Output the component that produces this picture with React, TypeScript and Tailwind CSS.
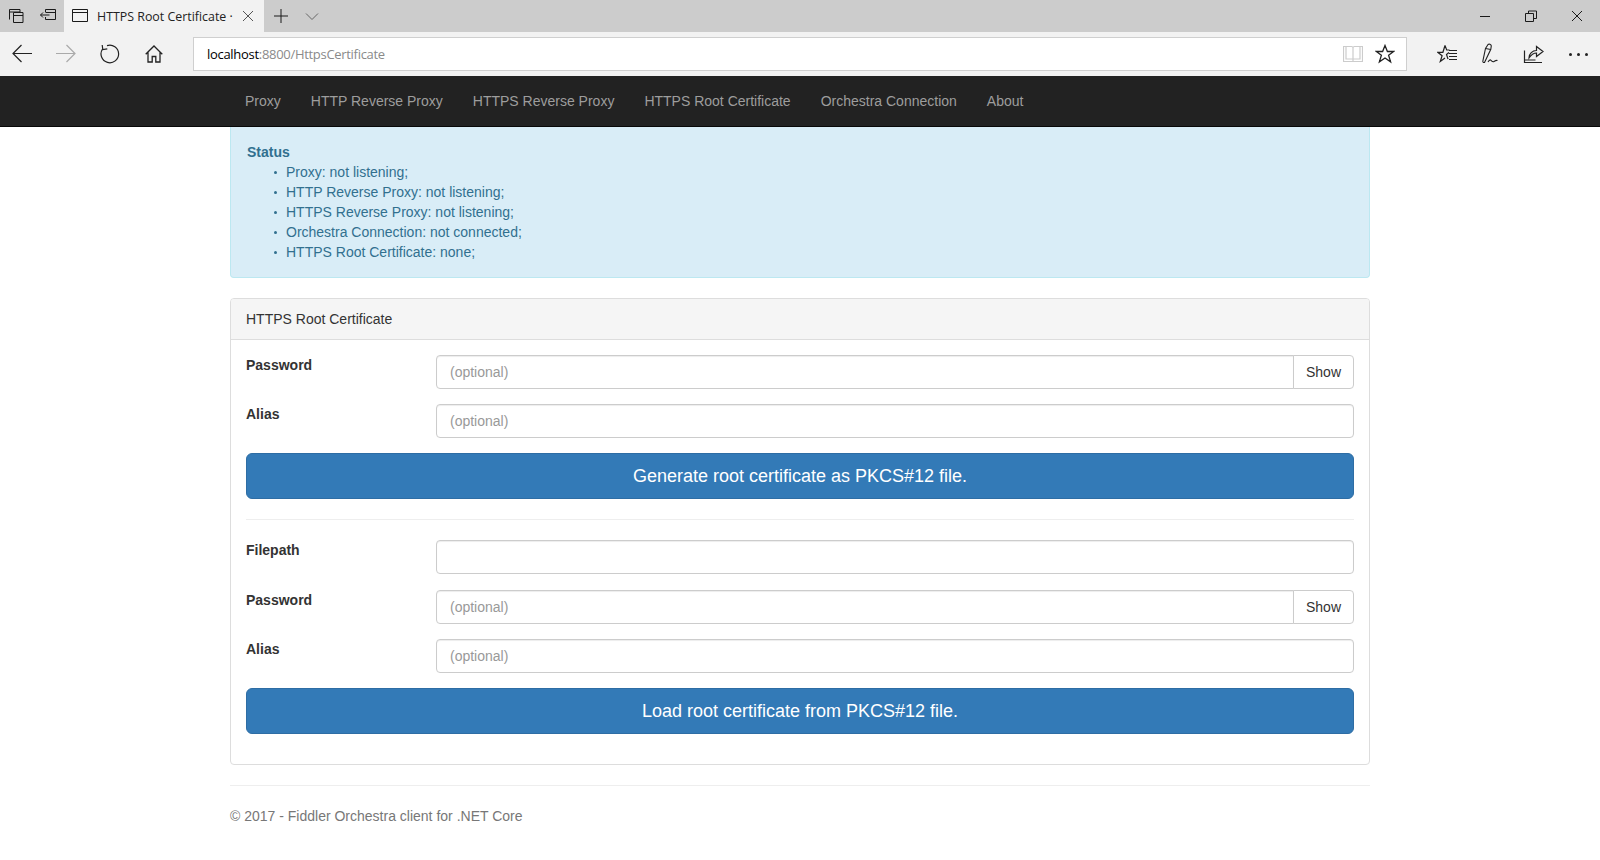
const navLinks = [
  "Proxy",
  "HTTP Reverse Proxy",
  "HTTPS Reverse Proxy",
  "HTTPS Root Certificate",
  "Orchestra Connection",
  "About",
];

const statusLines = [
  "Proxy: not listening;",
  "HTTP Reverse Proxy: not listening;",
  "HTTPS Reverse Proxy: not listening;",
  "Orchestra Connection: not connected;",
  "HTTPS Root Certificate: none;",
];

function Glyph({ size = 24, children }: { size?: number; children: React.ReactNode }) {
  return (
    <svg
      width={size}
      height={size}
      viewBox={`0 0 ${size} ${size}`}
      fill="none"
      stroke="currentColor"
      strokeWidth="1"
      className="block"
    >
      {children}
    </svg>
  );
}

function ChromeButton({ className, children }: { className: string; children: React.ReactNode }) {
  return <div className={`flex shrink-0 items-center justify-center ${className}`}>{children}</div>;
}

function TitleBar() {
  return (
    <div className="flex h-8 bg-[#cccccc] text-[#1a1a1a]">
      <ChromeButton className="w-8">
        <Glyph size={16}>
          <path d="M1.5 11.5v-10h10.5v3M1.5 4h10.5" />
          <path d="M5.5 4.5h9.5v10H5.5zM5.5 7.5h9.5" fill="#cccccc" />
        </Glyph>
      </ChromeButton>
      <ChromeButton className="w-8">
        <Glyph size={18}>
          <path d="M6.5 5v-2.5h10v10h-10V10M6.5 5.5h10M1.5 8h9M1.5 8l2.5-2.5M1.5 8l2.5 2.5" />
        </Glyph>
      </ChromeButton>
      <div className="flex w-[200px] shrink-0 items-center bg-[#f2f2f2] pl-2">
        <Glyph size={16}>
          <path d="M.5 1.5h15v12H.5zM.5 4.5h15" />
        </Glyph>
        <span className="ml-[9px] w-[140px] overflow-hidden whitespace-nowrap pt-px font-['Open_Sans',sans-serif] text-[12.4px] text-[#222]">
          HTTPS Root Certificate ·
        </span>
        <div className="ml-[5px] text-[#555]">
          <Glyph size={12}>
            <path d="M1 1l10 10M11 1L1 11" />
          </Glyph>
        </div>
      </div>
      <ChromeButton className="w-[34px]">
        <Glyph size={14}>
          <path d="M7 0v14M0 7h14" />
        </Glyph>
      </ChromeButton>
      <ChromeButton className="w-7 text-[#666]">
        <Glyph size={14}>
          <path d="M1 4.5l6 6 6-6" />
        </Glyph>
      </ChromeButton>
      <div className="flex-1" />
      <ChromeButton className="w-[46px]">
        <Glyph size={12}>
          <path d="M1 6.5h10" />
        </Glyph>
      </ChromeButton>
      <ChromeButton className="w-[46px]">
        <Glyph size={12}>
          <path d="M3.5 3V1h8v7.5H9M.5 3.5h8v8h-8z" />
        </Glyph>
      </ChromeButton>
      <ChromeButton className="w-[46px]">
        <Glyph size={12}>
          <path d="M1 1l10 10M11 1L1 11" />
        </Glyph>
      </ChromeButton>
    </div>
  );
}

function StarShape() {
  return <path d="M10 1.5l2.4 6h6.3l-5.1 3.8 2 6.5L10 14l-5.6 3.8 2-6.5L1.3 7.5h6.3z" strokeWidth="1.3" />;
}

function Toolbar() {
  return (
    <div className="flex h-11 items-center bg-[#f2f2f2] text-[#222]">
      <ChromeButton className="w-11">
        <Glyph size={20}>
          <path d="M20 9.5H1.5M9.5 1L1 9.5l8.5 8.5" strokeWidth="1.2" />
        </Glyph>
      </ChromeButton>
      <ChromeButton className="w-11 text-[#aaaaaa]">
        <Glyph size={20}>
          <path d="M0 9.5h18.5M10.5 1L19 9.5 10.5 18" strokeWidth="1.2" />
        </Glyph>
      </ChromeButton>
      <ChromeButton className="w-11">
        <Glyph size={20}>
          <path d="M7 1.6A8.8 8.8 0 1 1 2.4 5.2M2.2 1l.6 4.6 4.5-.7" strokeWidth="1.2" />
        </Glyph>
      </ChromeButton>
      <ChromeButton className="w-11">
        <Glyph size={18}>
          <path d="M.7 9.2L9 1l8.3 8.2M3 7.5v9.5h4.2v-5.5h3.6V17H15V7.5" strokeWidth="1.3" />
        </Glyph>
      </ChromeButton>
      <div className="mx-[17px] flex h-[34px] flex-1 items-center border border-[#cfcfcf] bg-white pl-[13px]">
        <span className="flex-1 font-['Open_Sans',sans-serif] text-[13px] tracking-[-0.3px] text-black">
          localhost<span className="text-[#8a8a8a]">:8800/HttpsCertificate</span>
        </span>
        <div className="mr-[12px] text-[#cccccc]">
          <Glyph size={20}>
            <path d="M.5 2.5h8c.8 0 1.5.5 1.5 1.2 0-.7.7-1.2 1.5-1.2h8v15h-19zM10 3.7V17.5M3 2.5v12.5h6.5M17 2.5v12.5h-6.5" strokeWidth="1.2" />
          </Glyph>
        </div>
        <div className="mr-[11px]">
          <Glyph size={20}>
            <StarShape />
          </Glyph>
        </div>
      </div>
      <ChromeButton className="w-11 pl-1">
        <Glyph size={22}>
          <path d="M8 2.5l1.7 4.5h2.8M12 9.5L9.5 11.5l1.5 4.5M8 15l-4.7 3.5 1.8-5.7L.8 9.3h5.1L8 2.5" strokeWidth="1.2" />
          <path d="M12 7.5h8M12 10.5h8M12 13.5h8M12 16.5h8" strokeWidth="1.2" />
        </Glyph>
      </ChromeButton>
      <ChromeButton className="w-11 pl-0.5">
        <Glyph size={22}>
          <path d="M4.5 19.5c-1.3.3-1.9-.4-1.6-1.7L5.5 5.5 8 1.5c1-.8 3-.3 3.3 1.3l-.5 3.5z" strokeWidth="1.1" />
          <path d="M5.5 5.5l5.3 1M8 19c1-1.5 2-2.7 3-1.7s2 1.8 3 1.2 2-1.4 3.5-1" strokeWidth="1.1" />
        </Glyph>
      </ChromeButton>
      <ChromeButton className="w-11">
        <Glyph size={22}>
          <path d="M1.5 7.5V19.5h17.5M1.5 17h11" strokeWidth="1.2" />
          <path d="M6 15c0-4.5 3.5-7.5 7.5-7.5V3.5l6.5 5-6.5 5v-3.5c-3 0-5.5 2-7.5 5z" strokeWidth="1.2" />
        </Glyph>
      </ChromeButton>
      <ChromeButton className="w-11 gap-[5px]">
        <span className="size-[3px] rounded-full bg-[#222]" />
        <span className="size-[3px] rounded-full bg-[#222]" />
        <span className="size-[3px] rounded-full bg-[#222]" />
      </ChromeButton>
    </div>
  );
}

function Field({ label, placeholder, show, className }: { label: string; placeholder?: string; show?: boolean; className: string }) {
  return (
    <div className={`flex ${className}`}>
      <label className="w-[190px] shrink-0 font-bold leading-5">{label}</label>
      <div className="flex h-[34px] flex-1">
        <input
          placeholder={placeholder}
          className={`h-full min-w-0 flex-1 border border-[#cccccc] bg-white px-[13px] text-[14px] shadow-[inset_0_1px_1px_rgba(0,0,0,0.075)] outline-none placeholder:text-[#999999] ${show ? "rounded-l-[4px]" : "rounded-[4px]"}`}
        />
        {show && (
          <button className="-ml-px w-[61px] rounded-r-[4px] border border-[#cccccc] bg-white text-[14px] text-[#333333]">
            Show
          </button>
        )}
      </div>
    </div>
  );
}

function PrimaryButton({ children }: { children: React.ReactNode }) {
  return (
    <button className="flex h-[46px] w-full items-center justify-center rounded-[6px] border border-[#2e6da4] bg-[#337ab7] text-[18px] text-white">
      {children}
    </button>
  );
}

export default function App() {
  return (
    <div className="h-[860px] overflow-hidden bg-white font-['Liberation_Sans',Arial,sans-serif] text-[14px] leading-5 text-[#333333]">
      <TitleBar />
      <Toolbar />

      <nav className="h-[51px] border-b border-[#080808] bg-[#222222]">
        <ul className="mx-auto flex w-[1140px]">
          {navLinks.map((link) => (
            <li key={link} className="px-[15px] py-[15px] text-[#9d9d9d]">
              {link}
            </li>
          ))}
        </ul>
      </nav>

      <main className="mx-auto w-[1140px]">
        <div className="rounded-b-[4px] border border-t-0 border-[#bce8f1] bg-[#d9edf7] px-[15px] pb-[15px] pt-[15px] text-[#31708f]">
          <strong className="ml-px block font-bold">Status</strong>
          <ul className="pl-10">
            {statusLines.map((line) => (
              <li key={line} className="flex items-center">
                <span className="-ml-[12px] mr-[9px] size-[3px] rounded-full bg-current" />
                {line}
              </li>
            ))}
          </ul>
        </div>

        <section className="mt-5 rounded-[4px] border border-[#dddddd]">
          <div className="rounded-t-[3px] border-b border-[#dddddd] bg-[#f5f5f5] px-[15px] py-[10px]">
            HTTPS Root Certificate
          </div>
          <div className="p-[15px]">
            <Field label="Password" placeholder="(optional)" show className="mb-[15px]" />
            <Field label="Alias" placeholder="(optional)" className="mb-[15px]" />
            <PrimaryButton>Generate root certificate as PKCS#12 file.</PrimaryButton>
            <hr className="my-5 border-t border-[#eeeeee]" />
            <Field label="Filepath" className="mb-4" />
            <Field label="Password" placeholder="(optional)" show className="mb-[15px]" />
            <Field label="Alias" placeholder="(optional)" className="mb-[15px]" />
            <PrimaryButton>Load root certificate from PKCS#12 file.</PrimaryButton>
            <div className="h-[15px]" />
          </div>
        </section>

        <hr className="mt-5 border-t border-[#eeeeee]" />
        <footer className="mt-5 text-[#777777]">© 2017 - Fiddler Orchestra client for .NET Core</footer>
      </main>
    </div>
  );
}
